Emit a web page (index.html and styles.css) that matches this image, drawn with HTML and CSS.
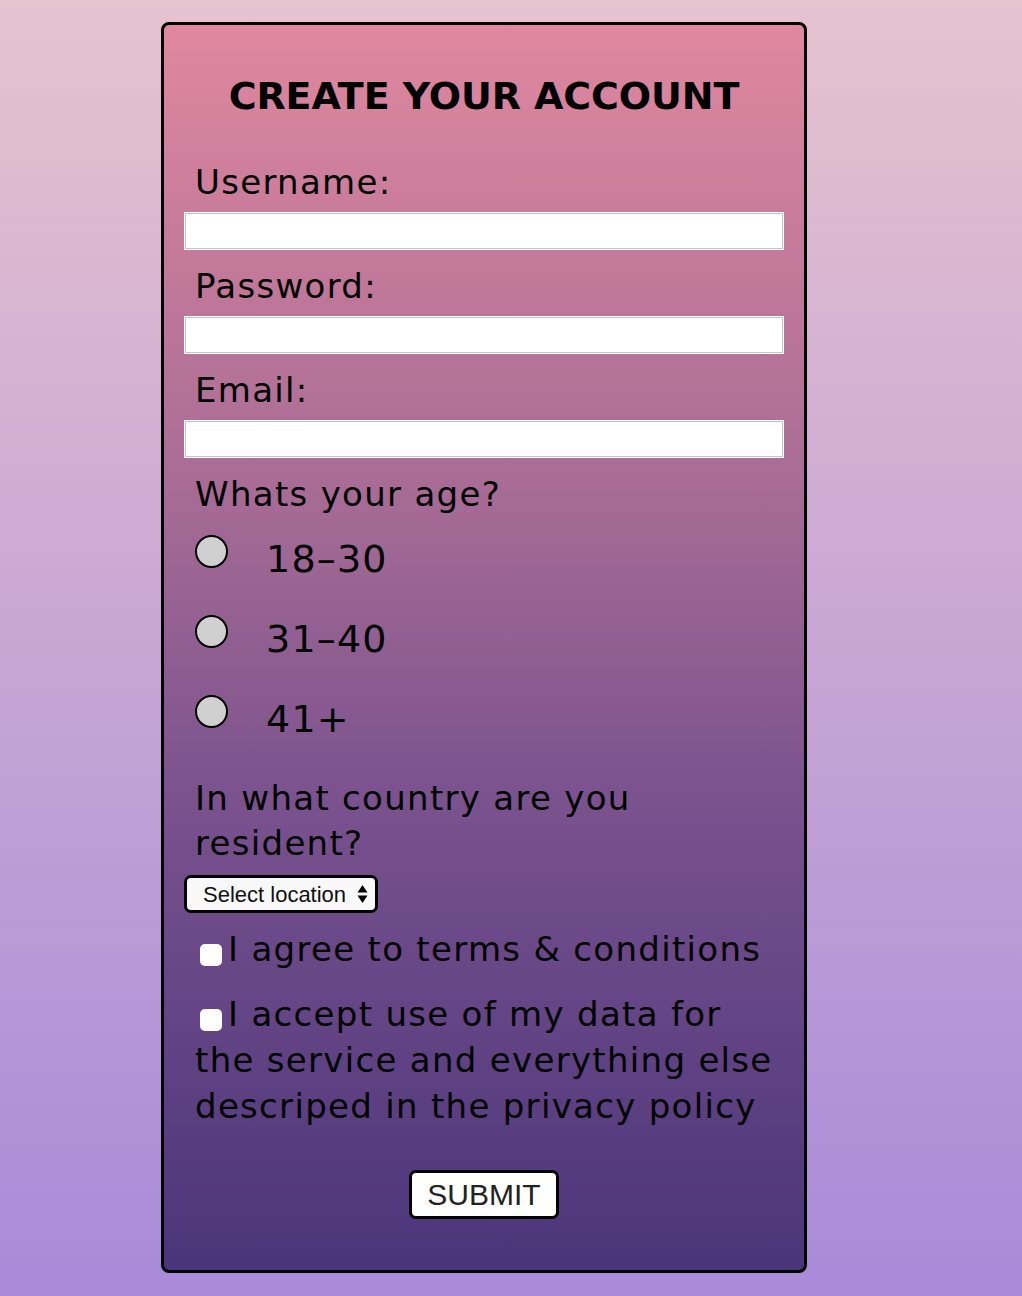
FILE: index.html
```html
<!DOCTYPE html>
<html lang="en">
<head>
<meta charset="utf-8">
<title>Create your account</title>
<link rel="stylesheet" href="styles.css">
</head>
<body>
<form class="card">
  <h1 class="title">CREATE YOUR ACCOUNT</h1>

  <label class="label" for="username">Username:</label>
  <input class="text-input" type="text" id="username">

  <label class="label" for="password">Password:</label>
  <input class="text-input" type="password" id="password">

  <label class="label" for="email">Email:</label>
  <input class="text-input" type="email" id="email">

  <p class="label age-label">Whats your age?</p>
  <label class="radio-row"><input class="radio" type="radio" name="age"><span>18&#8211;30</span></label>
  <label class="radio-row"><input class="radio" type="radio" name="age"><span>31&#8211;40</span></label>
  <label class="radio-row"><input class="radio" type="radio" name="age"><span>41+</span></label>

  <label class="label country-label" for="country">In what country are you resident?</label>
  <select class="select" id="country">
    <option>Select location</option>
  </select>

  <label class="label check-row"><input class="check" type="checkbox">I agree to terms &amp; conditions</label>
  <label class="label check-row check-row-long"><input class="check" type="checkbox">I accept use of my data for the service and everything else descriped in the privacy policy</label>

  <div class="actions">
    <button class="submit" type="button">SUBMIT</button>
  </div>
</form>
</body>
</html>
```

FILE: styles.css
```css
html {
  min-height: 100%;
  background: linear-gradient(to bottom, #e7c2cf 0%, #a88ad9 100%);
}

body {
  margin: 0;
  padding: 22px 0 0 161px;
  font-family: "DejaVu Sans", sans-serif;
  color: #000;
}

.card {
  box-sizing: border-box;
  width: 646px;
  border: 3px solid #000;
  border-radius: 8px;
  padding: 20px 20px 51px;
  background: linear-gradient(to bottom, #e0889f 0%, #a66b95 38%, #7a528e 62%, #4a357a 100%);
}

.title {
  margin: 29px 0 42px;
  font-size: 38px;
  line-height: 44px;
  font-weight: bold;
  letter-spacing: -0.1px;
  text-align: center;
}

.label {
  display: block;
  margin: 0 0 7px 11px;
  font-size: 34px;
  line-height: 45px;
  letter-spacing: 1.3px;
}

.text-input {
  display: block;
  box-sizing: border-box;
  width: 600px;
  height: 38px;
  margin: 0 0 14px;
  border: 1px solid #fff;
  box-shadow: inset 0 0 0 1px #c6c6c6;
  background: #fff;
  outline: none;
}

.age-label {
  margin-bottom: 19px;
}

.radio-row {
  display: flex;
  align-items: flex-start;
  margin: 0 0 34px 11px;
  font-size: 38px;
  line-height: 46px;
  letter-spacing: 1.2px;
}

.radio-row:last-of-type {
  margin-bottom: 36px;
}

.radio {
  appearance: none;
  -webkit-appearance: none;
  box-sizing: border-box;
  width: 33px;
  height: 33px;
  margin: -1px 38px 0 0;
  border: 2px solid #000;
  border-radius: 50%;
  background: #d0d0d0;
  flex: none;
}

.country-label {
  width: 589px;
  margin-bottom: 9px;
}

.select {
  appearance: none;
  -webkit-appearance: none;
  box-sizing: border-box;
  display: block;
  width: 194px;
  height: 38px;
  margin: 0 0 14px;
  padding: 0 0 0 16px;
  border: 3px solid #000;
  border-radius: 7px;
  font-family: "Liberation Sans", Arial, sans-serif;
  font-size: 22px;
  color: #111;
  background: #f8f8f8 url("data:image/svg+xml;utf8,<svg xmlns='http://www.w3.org/2000/svg' width='11' height='20' viewBox='0 0 11 20'><path d='M5.5 1 L10.5 8.5 H0.5 Z M5.5 19 L10.5 11.5 H0.5 Z' fill='%23000'/></svg>") no-repeat right 7px center;
}

.check-row {
  margin-bottom: 19px;
}

.check-row-long {
  line-height: 46px;
  margin-bottom: 41px;
}

.check {
  appearance: none;
  -webkit-appearance: none;
  display: inline-block;
  box-sizing: border-box;
  width: 22px;
  height: 22px;
  margin: 0 6px 0 5px;
  vertical-align: -5px;
  border-radius: 5px;
  background: #fff;
}

.actions {
  display: flex;
  justify-content: center;
}

.submit {
  box-sizing: border-box;
  height: 49px;
  padding: 0 15px;
  border: 3px solid #000;
  border-radius: 7px;
  background: #fff;
  font-family: "Liberation Sans", Arial, sans-serif;
  font-size: 30px;
  color: #222;
}
```
